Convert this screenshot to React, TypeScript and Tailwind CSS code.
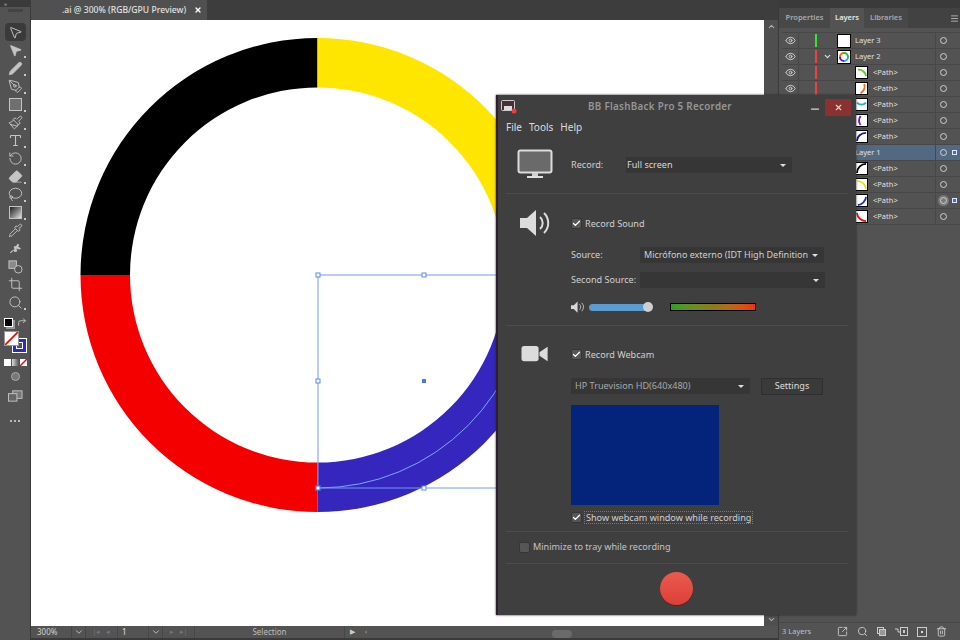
// App.tsx
import React from 'react';
import {
  MousePointer2,
  PenTool,
  Pen,
  Paintbrush,
  Type,
  RotateCcw,
  Eraser,
  Lasso,
  Pipette,
  Crop,
  Search,
  Eye,
  ChevronDown,
  ChevronUp,
  X,
  Minus,
  Check,
  Menu,
  SquareArrowOutUpRight,
  Trash2,
  CornerUpRight,
} from 'lucide-react';

const font = 'font-["Noto_Sans","Open_Sans",sans-serif]';

function Tool({ children, corner = true, active = false }: { children: React.ReactNode; corner?: boolean; active?: boolean }) {
  return (
    <div className={`relative w-[21px] h-[18px] flex items-center justify-center rounded-sm ${active ? 'bg-[#3a3a3a]' : ''}`}>
      {children}
      {corner && <span className="absolute right-0 bottom-[1px] w-[2px] h-[2px] bg-[#c8c8c8]" />}
    </div>
  );
}

function Toolbar() {
  const cls = 'w-[15px] h-[15px] text-[#c4c4c4]';
  return (
    <aside className="w-[31px] shrink-0 bg-[#535353] flex flex-col items-center border-r border-[#3a3a3a]">
      <div className="w-full h-[7px] bg-[#3a3a3a] flex items-center pl-1 text-[6px] leading-none text-[#c8c8c8]">»</div>
      <div className="w-[15px] h-[3px] bg-[#444] mt-[2px] mb-[11px]" />
      <Tool corner={false} active><MousePointer2 className={cls} strokeWidth={1.5} /></Tool>
      <Tool><MousePointer2 className={`${cls} fill-[#c4c4c4]`} strokeWidth={1} /></Tool>
      <Tool><Pen className={`${cls} fill-[#c4c4c4]`} strokeWidth={1.2} /></Tool>
      <Tool><PenTool className={cls} strokeWidth={1.5} /></Tool>
      <Tool><span className="w-[13px] h-[13px] bg-[#6f6f6f] border border-[#c4c4c4]" /></Tool>
      <Tool><Paintbrush className={cls} strokeWidth={1.5} /></Tool>
      <Tool><Type className={cls} strokeWidth={1.8} /></Tool>
      <Tool><RotateCcw className={cls} strokeWidth={1.5} /></Tool>
      <Tool><Eraser className={`${cls} fill-[#c4c4c4]`} strokeWidth={1.2} /></Tool>
      <Tool><Lasso className={cls} strokeWidth={1.5} /></Tool>
      <Tool><span className="w-[13px] h-[13px] border border-[#c4c4c4] bg-gradient-to-br from-[#222] to-[#e5e5e5]" /></Tool>
      <Tool corner={false}><Pipette className={cls} strokeWidth={1.5} /></Tool>
      <Tool corner={false}>
        <svg viewBox="0 0 16 16" className={cls} fill="#c4c4c4">
          <path d="M2 12c2-1 3-3 5-3l-1-3 3-1 1-2 2 1-1 2 3 2-2 1-3-1 1 3-3 1-1-2-3 3z" />
        </svg>
      </Tool>
      <Tool corner={false}>
        <svg viewBox="0 0 16 16" className={cls}>
          <rect x="1" y="2" width="8" height="8" fill="#8a8a8a" stroke="#c4c4c4" />
          <circle cx="11" cy="11" r="4" fill="#535353" stroke="#c4c4c4" />
        </svg>
      </Tool>
      <Tool corner={false}><Crop className={cls} strokeWidth={1.5} /></Tool>
      <Tool><Search className={cls} strokeWidth={1.5} /></Tool>
      <div className="w-[23px] h-[12px] mt-[5px] flex justify-between items-center">
        <span className="w-[9px] h-[9px] bg-black border border-white shadow-[2px_2px_0_#999]" />
        <CornerUpRight className="w-[10px] h-[10px] text-[#ccc]" />
      </div>
      <div className="relative w-[23px] h-[22px] mt-[3px]">
        <span className="absolute right-0 bottom-0 w-[15px] h-[15px] bg-[#2d2ac0] border border-white flex items-center justify-center">
          <span className="w-[7px] h-[7px] bg-[#535353] border border-white" />
        </span>
        <svg viewBox="0 0 15 15" className="absolute left-0 top-0 w-[15px] h-[15px] bg-white border border-[#999]">
          <line x1="0" y1="15" x2="15" y2="0" stroke="#e01010" strokeWidth="2" />
        </svg>
      </div>
      <div className="flex gap-[1px] mt-[6px] h-[7px]">
        <span className="w-[7px] bg-white" />
        <span className="w-[7px] bg-gradient-to-r from-[#ddd] to-[#555]" />
        <svg viewBox="0 0 7 7" className="w-[7px] h-[7px] bg-white"><line x1="0" y1="7" x2="7" y2="0" stroke="#e01010" strokeWidth="1.5" /></svg>
      </div>
      <div className="mt-[1px]">
        <Tool corner={false}>
          <span className="w-[9px] h-[9px] rounded-full bg-[#777] border border-[#aaa]" />
        </Tool>
      </div>
      <svg viewBox="0 0 16 12" className="w-[15px] h-[12px] mt-[5px]">
        <rect x="5" y="0.5" width="10" height="8" fill="#777" stroke="#c4c4c4" />
        <rect x="0.5" y="3.5" width="9" height="8" fill="#666" stroke="#c4c4c4" />
      </svg>
      <div className="flex gap-[2px] mt-[18px]">
        <span className="w-[2px] h-[2px] rounded-full bg-[#ddd]" />
        <span className="w-[2px] h-[2px] rounded-full bg-[#ddd]" />
        <span className="w-[2px] h-[2px] rounded-full bg-[#ddd]" />
      </div>
    </aside>
  );
}

function Artboard() {
  const handles = [
    [318, 275],
    [424, 275],
    [318, 381],
    [318, 488],
    [424, 488],
  ];
  return (
    <svg viewBox="31 20 733 606" className="w-full h-full block">
      <path d="M317.5 38A237 237 0 0 0 80.5 275H130A187.5 187.5 0 0 1 317.5 87.5Z" fill="#000" />
      <path d="M317.5 38A237 237 0 0 1 554.5 275H505A187.5 187.5 0 0 0 317.5 87.5Z" fill="#ffe600" />
      <path d="M80.5 275A237 237 0 0 0 317.5 512V462.5A187.5 187.5 0 0 1 130 275Z" fill="#f50000" />
      <path d="M317.5 512A237 237 0 0 0 554.5 275H505A187.5 187.5 0 0 1 317.5 462.5Z" fill="#3527be" />
      <path d="M318 488A212 213 0 0 0 530 275" fill="none" stroke="#7ea6ff" strokeWidth="1" />
      <rect x="318" y="275" width="212" height="213" fill="none" stroke="#6f9bf5" strokeWidth="1" />
      {handles.map(([x, y]) => (
        <rect key={`${x}-${y}`} x={x - 2} y={y - 2} width="4" height="4" fill="#fff" stroke="#5b8cf0" strokeWidth="1" />
      ))}
      <rect x="316" y="486" width="4" height="4" fill="#fff" stroke="#3f6fe0" />
      <rect x="422" y="379" width="4" height="4" fill="#3f7cf0" />
    </svg>
  );
}

function StatusBar() {
  const cell = 'h-full flex items-center border-r border-[#464646]';
  return (
    <div className={`h-[12px] shrink-0 bg-[#535353] flex items-center text-[8px] text-[#d0d0d0] ${font}`}>
      <div className={`${cell} w-[41px] pl-1.5`}>300%</div>
      <div className={`${cell} w-[14px] justify-center`}><ChevronDown className="w-2.5 h-2.5" /></div>
      <div className={`${cell} w-[32px] justify-center gap-1.5 text-[#777] text-[7px]`}>
        <span>|◂</span><span>◂</span>
      </div>
      <div className={`${cell} w-[31px] pl-1 text-[#e0e0e0]`}>1</div>
      <div className={`${cell} w-[14px] justify-center`}><ChevronDown className="w-2.5 h-2.5" /></div>
      <div className={`${cell} w-[32px] justify-center gap-1.5 text-[#777] text-[7px]`}>
        <span>▸</span><span>▸|</span>
      </div>
      <div className={`${cell} w-[150px] justify-center text-[#bbb]`}>Selection</div>
      <div className="w-[14px] flex justify-center text-[7px] text-[#ccc]">▶</div>
      <div className="w-[14px] flex justify-center text-[7px] text-[#aaa]">‹</div>
      <div className="flex-1 h-full flex justify-center items-end pr-[28px]">
        <span className="w-[20px] h-[8px] bg-[#6a6a6a] rounded-sm" />
      </div>
    </div>
  );
}

type Arc = { d: string; color: string };

function Thumb({ arcs, big = false }: { arcs: Arc[]; big?: boolean }) {
  return (
    <svg viewBox="0 0 12 12" className={`${big ? 'w-[14px] h-[14px]' : 'w-[13px] h-[13px]'} bg-white border border-black shrink-0`}>
      {arcs.map((a) => (
        <path key={a.d + a.color} d={a.d} fill="none" stroke={a.color} strokeWidth="2" />
      ))}
    </svg>
  );
}

const tl = 'M1 11A10 10 0 0 1 11 1';
const rows: { name: string; indent: boolean; bar?: string; arcs: Arc[]; chevron?: boolean; selected?: boolean; marker?: boolean }[] = [
  { name: 'Layer 3', indent: false, bar: '#39e03c', arcs: [] },
  {
    name: 'Layer 2',
    indent: false,
    bar: '#ee4040',
    chevron: true,
    arcs: [
      { d: 'M6 2A4 4 0 0 1 10 6', color: '#2fb52f' },
      { d: 'M10 6A4 4 0 0 1 6 10', color: '#22a8d8' },
      { d: 'M6 10A4 4 0 0 1 2 6', color: '#6a18d0' },
      { d: 'M2 6A4 4 0 0 1 6 2', color: '#e87010' },
    ],
  },
  { name: '<Path>', indent: true, bar: '#ee4040', arcs: [{ d: 'M2 3A8 8 0 0 1 11 10', color: '#5cd020' }] },
  { name: '<Path>', indent: true, bar: '#ee4040', arcs: [{ d: 'M9 1A8 8 0 0 1 5 11', color: '#ee7010' }] },
  { name: '<Path>', indent: true, bar: '#ee4040', arcs: [{ d: 'M1 4A7 7 0 0 0 11 4', color: '#20b0d8' }] },
  { name: '<Path>', indent: true, bar: '#ee4040', arcs: [{ d: 'M5 1A9 9 0 0 0 5 11', color: '#6a18d0' }] },
  { name: '<Path>', indent: true, arcs: [{ d: 'M1 11A10 9 0 0 1 11 2', color: '#1010a0' }] },
  { name: 'Layer 1', indent: false, arcs: [], selected: true },
  { name: '<Path>', indent: true, arcs: [{ d: tl, color: '#000' }] },
  { name: '<Path>', indent: true, arcs: [{ d: 'M1 2A10 10 0 0 1 11 11', color: '#f0e000' }] },
  { name: '<Path>', indent: true, marker: true, arcs: [{ d: 'M11 2A10 10 0 0 1 2 11', color: '#2828c0' }] },
  { name: '<Path>', indent: true, arcs: [{ d: 'M1 2A10 10 0 0 0 11 11', color: '#f01010' }] },
];

function LayerRow({ row }: { row: (typeof rows)[number] }) {
  return (
    <div className={`h-[16px] flex items-center border-b border-[#474747] ${row.selected ? 'bg-[#526a81]' : ''}`}>
      <div className="w-[17px] h-full flex items-center justify-center border-r border-[#474747]">
        {row.bar && <Eye className="w-[11px] h-[11px] text-[#d4d4d4]" />}
      </div>
      <div className="w-[18px] h-full flex justify-end items-center">
        {row.bar && <span className="w-[2px] h-[13px]" style={{ background: row.bar }} />}
      </div>
      <div className="w-[20px] flex justify-center">
        {row.chevron && <ChevronDown className="w-[9px] h-[9px] text-[#e0e0e0]" strokeWidth={3} />}
      </div>
      {row.indent && <div className="w-[18px]" />}
      <Thumb arcs={row.arcs} big={!row.indent} />
      <span className={`${row.indent ? 'ml-[5px]' : 'ml-[4px]'} flex-1 text-[7.5px] text-[#e0e0e0]`}>{row.name}</span>
      <div className="w-[16px] h-full flex items-center justify-center border-l border-[#474747] relative">
        {row.marker && <span className="absolute w-[11px] h-[11px] rounded-full bg-[#7a7a7a]" />}
        <span className="relative w-[7px] h-[7px] rounded-full border border-[#cfcfcf]" />
      </div>
      <div className="w-[9px] flex items-center pl-[1px]">
        {(row.selected || row.marker) && (
          <span className="w-[5px] h-[5px] bg-[#2f6fe0] border border-[#dfe8ff]" />
        )}
      </div>
    </div>
  );
}

function LayersPanel() {
  return (
    <aside className={`w-[182px] shrink-0 bg-[#535353] flex flex-col border-l border-[#3a3a3a] ${font}`}>
      <div className="h-[8px] bg-[#3a3a3a] shrink-0" />
      <div className="h-[20px] shrink-0 bg-[#424242] flex items-stretch text-[7.5px] text-[#a8a8a8] font-semibold">
        <div className="w-[51px] flex items-center justify-center bg-[#484848]">Properties</div>
        <div className="w-[34px] flex items-center justify-center bg-[#535353] text-[#e8e8e8]">Layers</div>
        <div className="w-[44px] flex items-center justify-center bg-[#484848]">Libraries</div>
        <div className="flex-1 flex items-center justify-end pr-[1px]"><Menu className="w-[9px] h-[9px] text-[#d0d0d0]" /></div>
      </div>
      <div className="flex-1 pl-[3px] pt-[4px]">
        <div className="border-t border-[#474747]">
          {rows.map((row, i) => (
            <LayerRow key={i} row={row} />
          ))}
        </div>
      </div>
      <div className="h-[18px] shrink-0 border-t border-[#474747] flex items-center text-[#c8c8c8]">
        <span className="w-[55px] pl-[3px] text-[7.5px] text-[#b8c4d0]">3 Layers</span>
        <div className="flex-1 flex items-center justify-end gap-[9px] pr-[13px]">
          <SquareArrowOutUpRight className="w-[11px] h-[11px]" />
          <Search className="w-[11px] h-[11px]" />
          <svg viewBox="0 0 9 9" className="w-[9px] h-[9px]">
            <rect x="0.5" y="0.5" width="6" height="6" fill="none" stroke="#ccc" />
            <rect x="2.5" y="2.5" width="6" height="6" fill="#999" stroke="#ccc" />
          </svg>
          <svg viewBox="0 0 13 9" className="w-[13px] h-[9px]">
            <rect x="5.5" y="0.5" width="7" height="8" fill="none" stroke="#ccc" />
            <path d="M0 2h3v3H6" fill="none" stroke="#ccc" />
            <rect x="8" y="3" width="2" height="3" fill="#ccc" />
          </svg>
          <span className="w-[10px] h-[10px] border border-[#ccc] flex items-center justify-center">
            <span className="w-[2px] h-[2px] bg-[#ddd]" />
          </span>
          <Trash2 className="w-[11px] h-[11px]" />
        </div>
      </div>
    </aside>
  );
}

function CheckBox({ checked = true }: { checked?: boolean }) {
  return (
    <span className="w-[11px] h-[11px] rounded-[2px] bg-[#565656] border border-[#353535] flex items-center justify-center shrink-0">
      {checked && <Check className="w-[9px] h-[9px] text-white" strokeWidth={3.5} />}
    </span>
  );
}

function Dropdown({ label, className }: { label?: string; className: string }) {
  return (
    <div className={`h-[16px] bg-[#363636] flex items-center justify-between pr-[6px] ${className}`}>
      <span className="whitespace-nowrap">{label}</span>
      <span className="w-0 h-0 border-x-[3px] border-x-transparent border-t-[3px] border-t-[#e0e0e0]" />
    </div>
  );
}

function Divider() {
  return <div className="h-[1px] bg-[#4c4c4c] mx-[8px]" />;
}

function RecorderWindow() {
  return (
    <div className={`absolute left-[496px] top-[95px] w-[360px] h-[520px] bg-[#403f40] border-l-2 border-[#2e1f30] shadow-[0_0_2px_#222] flex flex-col text-[9.1px] text-[#d0d0d0] ${font}`}>
      <div className="h-[23px] shrink-0 flex items-center relative">
        <svg viewBox="0 0 16 14" className="w-[16px] h-[14px] ml-[3px]">
          <rect x="0.5" y="0.5" width="13" height="10" rx="1" fill="#4a2f3a" stroke="#ccc" />
          <rect x="3" y="6" width="8" height="4" fill="#ddd" />
          <circle cx="13" cy="11" r="2.5" fill="#e84040" />
        </svg>
        <span className="flex-1 text-center text-[#969696] text-[9.8px] font-semibold tracking-[0.3px] pr-[6px] mt-[2px]">BB FlashBack Pro 5 Recorder</span>
        <Minus className="w-[12px] h-[12px] mt-[4px] text-[#d8d8d8] mr-[4px]" strokeWidth={2.5} />
        <div className="w-[26px] h-[17px] mr-[5px] mt-[1px] bg-[#8a3232] flex items-center justify-center">
          <X className="w-[9px] h-[9px] text-[#f5d8c8]" strokeWidth={3} />
        </div>
      </div>
      <div className="h-[18px] shrink-0 flex items-center gap-[7px] pl-[8px] text-[10px] text-[#dcdcdc]">
        <span>File</span>
        <span>Tools</span>
        <span>Help</span>
      </div>

      {/* record target */}
      <div className="h-[57px] shrink-0 flex items-center">
        <div className="w-[73px] flex justify-center">
          <svg viewBox="0 0 36 30" className="w-[36px] h-[30px] mt-[-2px]">
            <rect x="1.5" y="1.5" width="33" height="22" rx="2" fill="#6a6a6a" stroke="#dcdcdc" strokeWidth="2" />
            <rect x="15" y="24" width="6" height="3" fill="#cfcfcf" />
            <rect x="10" y="27" width="16" height="2" fill="#e0e0e0" />
          </svg>
        </div>
        <span className="w-[55px]">Record:</span>
        <Dropdown label="Full screen" className="w-[166px] mt-[1px] pl-[1px] text-[#d8d8d8]" />
      </div>
      <Divider />

      {/* sound */}
      <div className="h-[131px] shrink-0 flex flex-col pt-[18px]">
        <div className="flex items-center h-[22px]">
          <div className="w-[73px] flex justify-center">
            <svg viewBox="0 0 32 26" className="w-[32px] h-[26px]">
              <path d="M1 8h7l9-8v26l-9-8H1z" fill="#dcdcdc" />
              <path d="M21 7a8 8 0 0 1 0 12M25 3a14 14 0 0 1 0 20" fill="none" stroke="#dcdcdc" strokeWidth="2" />
            </svg>
          </div>
          <div className="flex items-center gap-[3px] mt-[2px]"><CheckBox /><span>Record Sound</span></div>
        </div>
        <div className="flex items-center h-[16px] mt-[13px] pl-[73px]">
          <span className="w-[69px]">Source:</span>
          <Dropdown label="Micrófono externo (IDT High Definition" className="w-[184px] pl-[4px] text-[9px] text-[#d0d0d0]" />
        </div>
        <div className="flex items-center h-[16px] mt-[9px] pl-[73px]">
          <span className="w-[69px] whitespace-nowrap">Second Source:</span>
          <Dropdown className="w-[185px] pl-[4px]" />
        </div>
        <div className="flex items-center h-[12px] mt-[13px] pl-[73px]">
          <svg viewBox="0 0 16 12" className="w-[15px] h-[12px] mr-[3px]">
            <path d="M0 4h3l4-4v12l-4-4H0z" fill="#d8d8d8" />
            <path d="M9 3a4 4 0 0 1 0 6M11.5 1.5a7 7 0 0 1 0 9" fill="none" stroke="#bbb" strokeWidth="1" />
          </svg>
          <div className="w-[56px] h-[7px] rounded-l-full bg-[#5b9bd0]" />
          <span className="w-[10px] h-[10px] rounded-full bg-[#cfcfcf] -ml-[2px]" />
          <div className="w-[86px] h-[8px] ml-[17px] border border-black bg-gradient-to-r from-[#22a028] via-[#8a7a20] to-[#f03010]" />
        </div>
      </div>
      <Divider />

      {/* webcam */}
      <div className="h-[205px] shrink-0 flex flex-col pt-[18px]">
        <div className="flex items-center h-[20px]">
          <div className="w-[73px] flex justify-center">
            <svg viewBox="0 0 30 20" className="w-[28px] h-[18px]">
              <rect x="0" y="1" width="19" height="17" rx="3" fill="#dcdcdc" />
              <path d="M20 8l9-6v16l-9-6z" fill="#dcdcdc" />
            </svg>
          </div>
          <div className="flex items-center gap-[3px] mt-[1px]"><CheckBox /><span>Record Webcam</span></div>
        </div>
        <div className="flex items-center h-[16px] mt-[14px] pl-[73px]">
          <Dropdown label="HP Truevision HD(640x480)" className="w-[179px] pl-[4px] text-[#a8a8a8]" />
          <div className="w-[62px] h-[17px] ml-[11px] bg-[#3a3a3a] border border-[#2f2f2f] flex items-center justify-center text-[#dcdcdc]">Settings</div>
        </div>
        <div className="w-[148px] h-[100px] ml-[73px] mt-[11px] bg-[#04237a]" />
        <div className="flex items-center gap-[2px] ml-[73px] mt-[6px]">
          <CheckBox />
          <span className="border border-dotted border-[#777] px-[1px] leading-[11px]">Show webcam window while recording</span>
        </div>
      </div>
      <Divider />

      <div className="h-[31px] shrink-0 flex items-center gap-[3px] pl-[21px] pb-[1px] text-[#c4c4c4]">
        <CheckBox checked={false} />
        <span>Minimize to tray while recording</span>
      </div>
      <Divider />

      <div className="flex-1 flex items-center justify-center pr-[2px] pb-[2px]">
        <span className="w-[33px] h-[33px] rounded-full bg-gradient-to-b from-[#ea5a50] to-[#dc3f36] shadow-[0_1px_0_#6a1a14]" />
      </div>
    </div>
  );
}

export default function App() {
  return (
    <div className="relative w-[960px] h-[640px] overflow-hidden flex bg-[#3a3a3a]">
      <Toolbar />
      <main className="flex-1 min-w-0 flex flex-col">
        <div className={`h-[20px] shrink-0 bg-[#3d3d3d] flex items-stretch ${font}`}>
          <div className="w-[176px] bg-[#505050] flex items-center justify-between pl-[31px] pr-[2px] text-[8.6px] font-medium text-[#e0e0e0]">
            <span>.ai @ 300% (RGB/GPU Preview)</span>
            <X className="w-[8px] h-[8px] mr-[3px] text-white" strokeWidth={4} />
          </div>
        </div>
        <div className="flex-1 min-h-0 flex">
          <div className="flex-1 min-w-0 bg-white"><Artboard /></div>
          <div className="w-[14px] shrink-0 bg-[#4f4f4f] flex flex-col justify-between items-center py-[2px]">
            <ChevronUp className="w-[9px] h-[9px] text-[#aaa]" strokeWidth={3} />
            <ChevronDown className="w-[9px] h-[9px] text-[#aaa]" strokeWidth={3} />
          </div>
        </div>
        <StatusBar />
        <div className="h-[2px] shrink-0 bg-[#3a3a3a]" />
      </main>
      <LayersPanel />
      <RecorderWindow />
    </div>
  );
}
